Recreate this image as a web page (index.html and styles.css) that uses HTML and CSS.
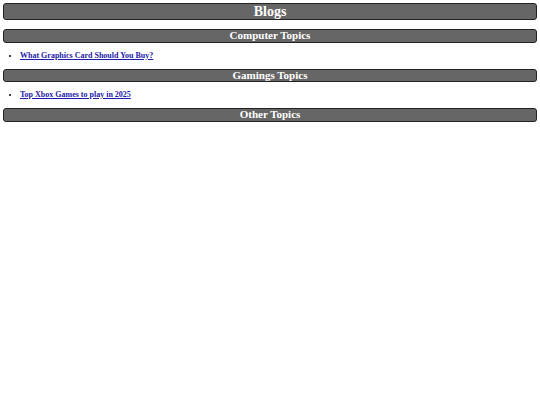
FILE: index.html
```html
<!DOCTYPE html>
<html>
<head>
<meta charset="utf-8">
<link rel="stylesheet" href="styles.css">
</head>
<body>
<h1 class="title">Blogs</h1>
<h2 class="topic">Computer Topics</h2>
<ul class="posts">
  <li><a href="#">What Graphics Card Should You Buy?</a></li>
</ul>
<h2 class="topic">Gamings Topics</h2>
<ul class="posts">
  <li><a href="#">Top Xbox Games to play in 2025</a></li>
</ul>
<h2 class="topic">Other Topics</h2>
</body>
</html>
```
FILE: styles.css
```css
body {
  margin: 3px;
  font-family: "Liberation Serif", "Times New Roman", serif;
  background: #fff;
}
.title, .topic {
  background: #666;
  color: #fff;
  border: 1px solid #222;
  border-radius: 3px;
  text-align: center;
  font-weight: bold;
  margin: 0;
}
.title {
  font-size: 14px;
  line-height: 15px;
  margin-bottom: 9px;
}
.topic {
  font-size: 11px;
  line-height: 11.5px;
}
.posts {
  margin: 0;
  padding: 7px 0 7px 17px;
  font-size: 8px;
  font-weight: bold;
  line-height: 12px;
}
.posts li {
  margin: 0;
}
.posts a {
  color: #1c1ca8;
}
```
